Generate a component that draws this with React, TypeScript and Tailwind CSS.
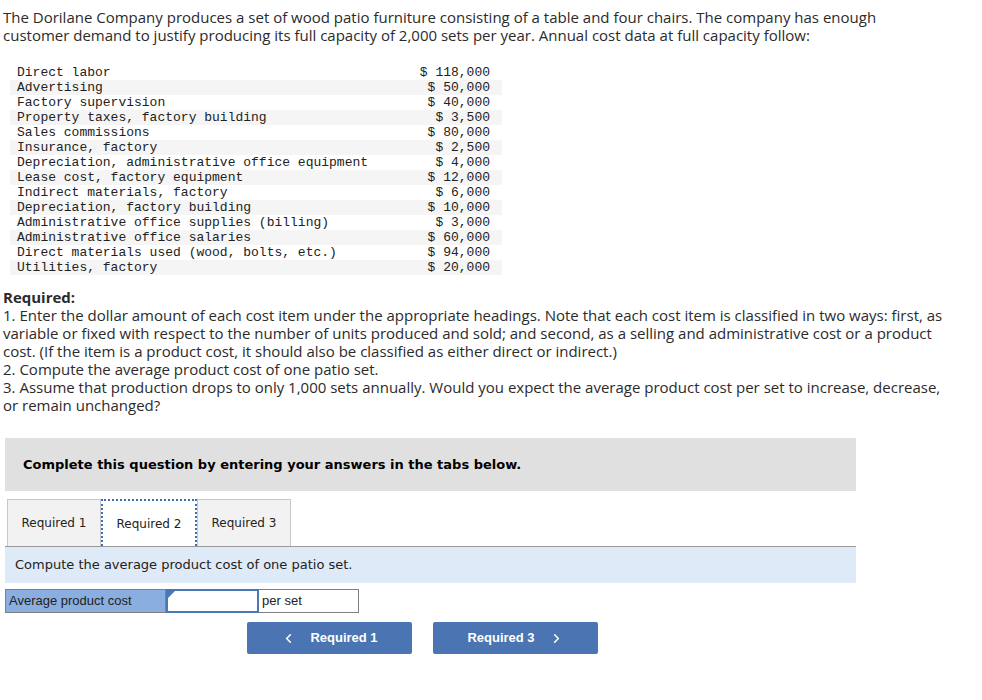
import { ChevronLeft, ChevronRight } from "lucide-react";

const costs = [
  ["Direct labor", "$ 118,000"],
  ["Advertising", "$ 50,000"],
  ["Factory supervision", "$ 40,000"],
  ["Property taxes, factory building", "$ 3,500"],
  ["Sales commissions", "$ 80,000"],
  ["Insurance, factory", "$ 2,500"],
  ["Depreciation, administrative office equipment", "$ 4,000"],
  ["Lease cost, factory equipment", "$ 12,000"],
  ["Indirect materials, factory", "$ 6,000"],
  ["Depreciation, factory building", "$ 10,000"],
  ["Administrative office supplies (billing)", "$ 3,000"],
  ["Administrative office salaries", "$ 60,000"],
  ["Direct materials used (wood, bolts, etc.)", "$ 94,000"],
  ["Utilities, factory", "$ 20,000"],
];

const tabs = ["Required 1", "Required 2", "Required 3"];

function App() {
  return (
    <main className="min-h-screen bg-white text-[#2b2b2b]">
      {/* question text */}
      <div className="pl-[3px] pt-[8px] w-[975px] text-[15px] leading-[18px] font-['Open_Sans',sans-serif]">
        <p>
          The Dorilane Company produces a set of wood patio furniture consisting of a table and four chairs. The company has enough
          <br />
          customer demand to justify producing its full capacity of 2,000 sets per year. Annual cost data at full capacity follow:
        </p>
      </div>

      {/* cost data */}
      <table className="ml-[10px] mt-[21px] w-[492px] font-['Liberation_Mono',monospace] text-[13px] leading-[15px] text-[#222]">
        <tbody>
          {costs.map(([label, amount], i) => (
            <tr key={label} className={i % 2 === 1 ? "bg-[#f5f5f5]" : ""}>
              <td className="pl-[7px] whitespace-pre">{label}</td>
              <td className="pr-[12px] text-right whitespace-pre">{amount}</td>
            </tr>
          ))}
        </tbody>
      </table>

      {/* required */}
      <div className="pl-[3px] mt-[13px] w-[975px] text-[15px] leading-[18px] font-['Open_Sans',sans-serif]">
        <p className="font-bold">Required:</p>
        <p>
          1. Enter the dollar amount of each cost item under the appropriate headings. Note that each cost item is classified in two ways: first, as
          <br />
          variable or fixed with respect to the number of units produced and sold; and second, as a selling and administrative cost or a product
          <br />
          cost. (If the item is a product cost, it should also be classified as either direct or indirect.)
        </p>
        <p>2. Compute the average product cost of one patio set.</p>
        <p>
          3. Assume that production drops to only 1,000 sets annually. Would you expect the average product cost per set to increase, decrease,
          <br />
          or remain unchanged?
        </p>
      </div>

      {/* answer area */}
      <div className="ml-[5px] mt-[24px] w-[851px] font-['DejaVu_Sans',sans-serif]">
        <div className="h-[53px] bg-[#e0e0e0] flex items-center pl-[18px]">
          <p className="text-[13px] font-bold text-black">
            Complete this question by entering your answers in the tabs below.
          </p>
        </div>

        <div className="mt-[8px] flex pl-[2px] border-b border-[#999]">
          {tabs.map((tab, i) =>
            i === 1 ? (
              <div
                key={tab}
                className="h-[47px] w-[96px] flex items-center justify-center bg-white border-2 border-dotted border-[#3b6fb6] border-b-0 text-[12px] text-[#222]"
              >
                {tab}
              </div>
            ) : (
              <div
                key={tab}
                className="h-[47px] w-[94px] flex items-center justify-center bg-[#f2f2f2] border border-[#c8c8c8] border-b-0 text-[12px] text-[#222]"
              >
                {tab}
              </div>
            )
          )}
        </div>

        <div className="h-[36px] bg-[#deeaf7] flex items-center pl-[10px]">
          <p className="text-[13px] text-[#222]">Compute the average product cost of one patio set.</p>
        </div>

        <div className="mt-[6px] flex h-[24px] font-['Liberation_Sans',sans-serif] text-[13px] text-[#222]">
          <div className="w-[161px] bg-[#8aaee0] border border-[#808080] pl-[3px] flex items-center">
            Average product cost
          </div>
          <div className="relative w-[93px] bg-white border-2 border-[#4a77b5]">
            <span className="absolute left-0 top-0 w-0 h-0 border-t-[7px] border-t-[#4a77b5] border-r-[7px] border-r-transparent" />
          </div>
          <div className="w-[100px] bg-white border border-[#808080] border-l-0 pl-[3px] flex items-center">
            per set
          </div>
        </div>

        <div className="mt-[9px] flex gap-[21px] pl-[242px] font-['Liberation_Sans',sans-serif]">
          <button className="h-[32px] w-[165px] rounded-[2px] bg-[#4a74b2] text-white text-[13px] font-bold flex items-center justify-center gap-[14px]">
            <ChevronLeft size={15} strokeWidth={2.5} />
            Required 1
          </button>
          <button className="h-[32px] w-[165px] rounded-[2px] bg-[#4a74b2] text-white text-[13px] font-bold flex items-center justify-center gap-[14px]">
            Required 3
            <ChevronRight size={15} strokeWidth={2.5} />
          </button>
        </div>
      </div>
    </main>
  );
}

export default App;
